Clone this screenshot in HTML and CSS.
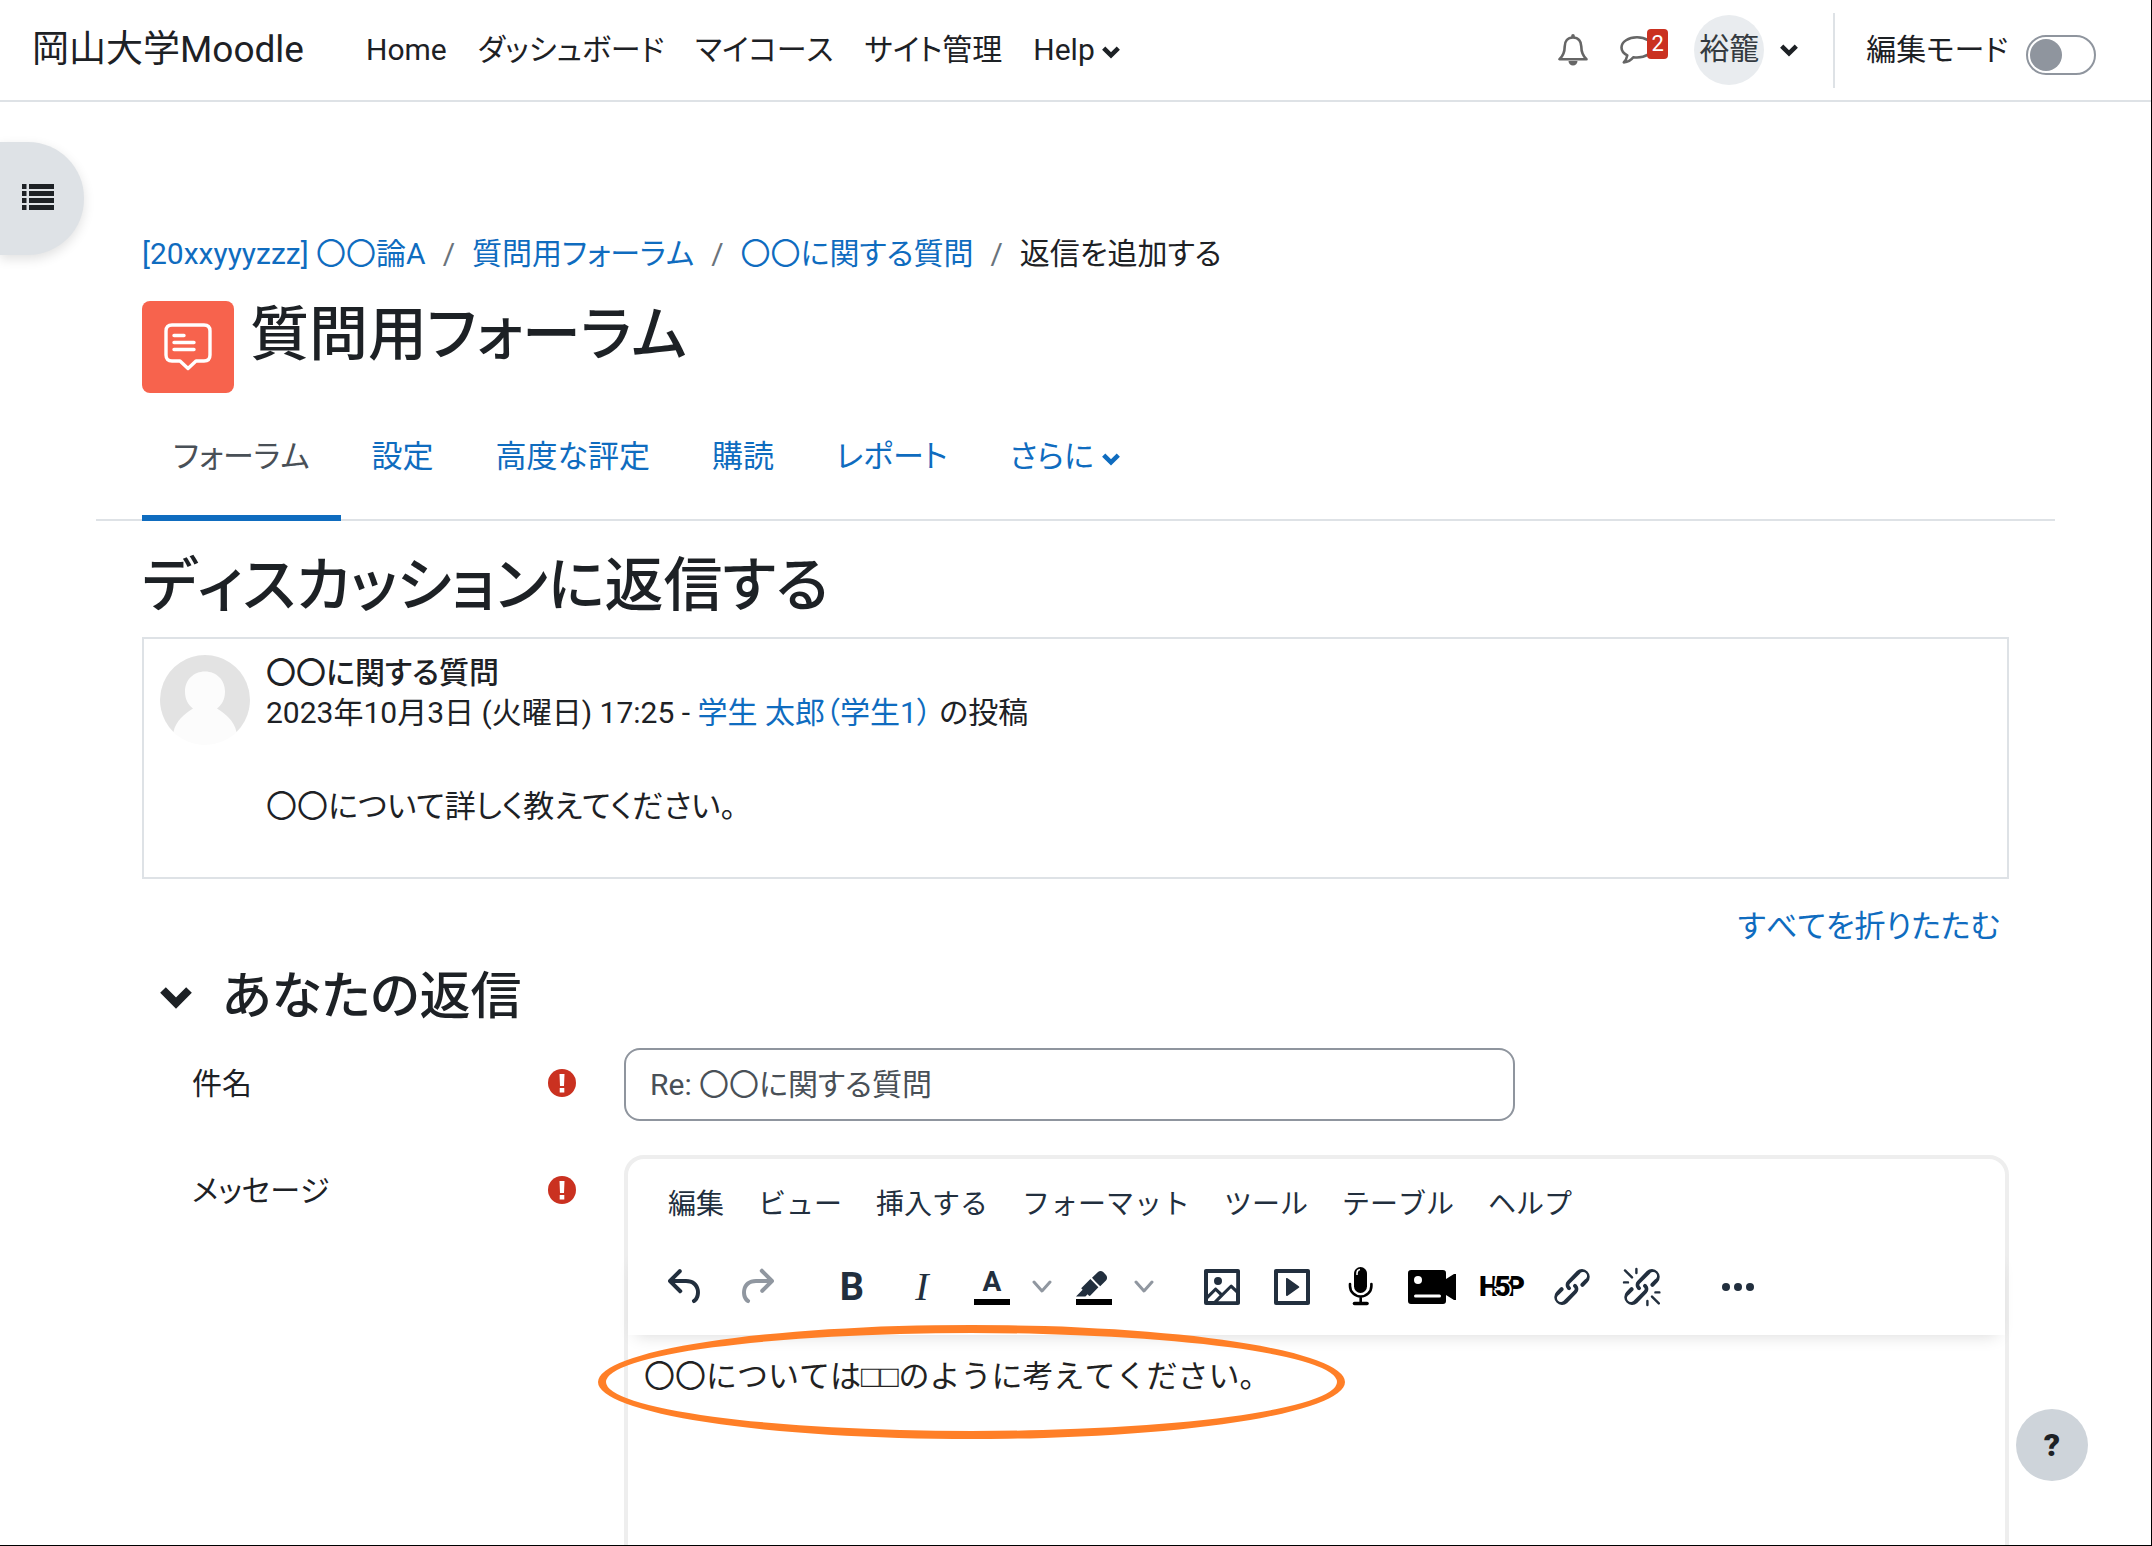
FILE: index.html
```html
<!DOCTYPE html>
<html lang="ja">
<head>
<meta charset="utf-8">
<meta name="viewport" content="width=device-width, initial-scale=1">
<title>質問用フォーラム: 返信を追加する</title>
<link rel="stylesheet" href="styles.css">
</head>
<body>
<svg class="sprite" aria-hidden="true">
  <symbol id="chevron" viewBox="0 0 16 12"><path d="M1.500 2.500L8 9l6.500-6.500" fill="none" stroke="currentColor" stroke-width="4"/></symbol>
  <symbol id="thin-chevron" viewBox="0 0 20 14"><path d="M2 2l8 9 8-9" fill="none" stroke="currentColor" stroke-width="3" stroke-linecap="round" stroke-linejoin="round"/></symbol>
  <symbol id="required" viewBox="0 0 28 28"><circle cx="14" cy="14" r="14" fill="#ca3120"/><path d="M11.500 5h5l-.5 12h-4zM11.700 19h4.600v4.500h-4.600z" fill="#fff"/></symbol>
</svg>
<div class="page">
  <header class="navbar">
    <a class="brand" href="#">岡山大学Moodle</a>
    <nav class="primary-nav" aria-label="サイトナビゲーション">
      <a href="#">Home</a>
      <a href="#">ダッシュボード</a>
      <a href="#">マイコース</a>
      <a href="#">サイト管理</a>
      <a href="#">Help <svg class="caret"><use href="#chevron"/></svg></a>
    </nav>
    <div class="user-nav">
      <button class="icon-button" type="button" aria-label="通知">
        <svg width="30" height="32" viewBox="0 0 30 32"><path d="M15 3.500c-5.500 0-8.300 3.900-8.300 9 0 6.200-1.900 9.700-5.200 12.700h27c-3.300-3-5.200-6.500-5.200-12.700 0-5.100-2.800-9-8.300-9z" fill="none" stroke="#666" stroke-width="2.600" stroke-linejoin="round"/><path d="M13.200 4V1.800a1.800 1.800 0 0 1 3.600 0V4zM10.500 27h9a4.500 4.500 0 0 1-9 0z" fill="#666"/></svg>
      </button>
      <button class="icon-button messages" type="button" aria-label="メッセージ">
        <svg width="34" height="30" viewBox="0 0 34 30"><path d="M17 2.300C8.500 2.300 1.500 6.700 1.500 12.500c0 3.300 2.200 6 5.800 7.900-.5 2.900-1.600 5-3.500 7 4-.4 7.300-2.300 9.500-5.200 1.200.2 2.400.3 3.700.3 8.500 0 15.500-4.200 15.500-10S25.500 2.300 17 2.300z" fill="none" stroke="#666" stroke-width="2.600" stroke-linejoin="round"/></svg>
        <span class="count">2</span>
      </button>
      <button class="user-menu" type="button"><span class="initials">裕籠</span><svg class="caret"><use href="#chevron"/></svg></button>
      <div class="edit-mode">
        <label for="editmode">編集モード</label>
        <input id="editmode" class="switch" type="checkbox" role="switch">
      </div>
    </div>
  </header>

  <button class="drawer-toggle" type="button" aria-label="コースインデックスを開く">
    <svg width="32" height="26" viewBox="0 0 32 26"><path d="M0 0h4.500v5H0zM7 0h25v5H7zM0 7h4.500v5H0zM7 7h25v5H7zM0 14h4.500v5H0zM7 14h25v5H7zM0 21h4.500v5H0zM7 21h25v5H7z" fill="currentColor"/></svg>
  </button>

  <main class="content">
    <nav aria-label="パンくず">
      <ol class="breadcrumb">
        <li><a href="#">[20xxyyyzzz] 〇〇論A</a></li>
        <li><a href="#">質問用フォーラム</a></li>
        <li><a href="#">〇〇に関する質問</a></li>
        <li>返信を追加する</li>
      </ol>
    </nav>

    <div class="activity-header">
      <span class="activity-icon">
        <svg width="48" height="48" viewBox="0 0 48 48" fill="none" stroke="#fff" stroke-width="3.400" stroke-linecap="round" stroke-linejoin="round"><path d="M8 2h32q6 0 6 6v24q0 6-6 6h-8l-8 7.500L16 38H8q-6 0-6-6V8q0-6 6-6z"/><path d="M10 12.500h10M10 19.500h20M10 26.500h20"/></svg>
      </span>
      <h1>質問用フォーラム</h1>
    </div>

    <nav class="tabs" aria-label="活動">
      <a class="active" href="#" aria-current="page">フォーラム</a>
      <a href="#">設定</a>
      <a href="#">高度な評定</a>
      <a href="#">購読</a>
      <a href="#">レポート</a>
      <a href="#">さらに <svg class="caret"><use href="#chevron"/></svg></a>
    </nav>

    <h2>ディスカッションに返信する</h2>

    <article class="post">
      <svg class="avatar" viewBox="0 0 90 90"><circle cx="45" cy="45" r="45" fill="#fcfcfc"/><path d="M45 0a45 45 0 0 0-31.500 77.100C15.500 66 25 58.500 33 53.500c-5-4-8-9-8-17C25 25 33.500 16.500 45 16.500S65 25 65 36.500c0 8-3 13-8 17 8 5 17.500 12.500 19.500 23.600A45 45 0 0 0 45 0z" fill="#e3e3e3"/></svg>
      <div class="post-text">
        <h3>〇〇に関する質問</h3>
        <p>2023年10月3日 (火曜日) 17:25 - <a href="#">学生 太郎（学生1）</a> の投稿</p>
        <p class="post-body">〇〇について詳しく教えてください。</p>
      </div>
    </article>

    <form class="reply">
      <div class="collapse-row"><a href="#">すべてを折りたたむ</a></div>
      <div class="section-title">
        <svg class="section-caret"><use href="#chevron"/></svg>
        <h3>あなたの返信</h3>
      </div>

      <div class="field">
        <label for="subject">件名</label>
        <svg class="required" role="img" aria-label="必須"><use href="#required"/></svg>
        <input id="subject" class="subject" type="text" value="Re: 〇〇に関する質問">
      </div>

      <div class="field">
        <label for="message">メッセージ</label>
        <svg class="required" role="img" aria-label="必須"><use href="#required"/></svg>
        <div class="editor">
          <div class="menubar">
            <button type="button">編集</button>
            <button type="button">ビュー</button>
            <button type="button">挿入する</button>
            <button type="button">フォーマット</button>
            <button type="button">ツール</button>
            <button type="button">テーブル</button>
            <button type="button">ヘルプ</button>
          </div>
          <div class="toolbar">
            <div class="group">
              <button type="button" aria-label="元に戻す"><svg viewBox="0 0 24 24"><path d="M6.400 8H12c3.700 0 6.200 2 6.800 5.100.6 2.700-.4 5.600-2.300 6.800a1 1 0 0 1-1-1.800c1.100-.6 1.800-2.700 1.400-4.600-.5-2.100-2.100-3.500-4.900-3.500H6.400l3.300 3.300a1 1 0 1 1-1.400 1.400l-5-5a1 1 0 0 1 0-1.400l5-5a1 1 0 0 1 1.400 1.400z"/></svg></button>
              <button type="button" aria-label="やり直し" disabled><svg viewBox="0 0 24 24"><path d="M17.600 10H12c-2.800 0-4.400 1.400-4.900 3.500-.4 2 .3 4 1.400 4.600a1 1 0 1 1-1 1.800c-2-1.200-2.900-4.100-2.300-6.800.6-3 3-5.100 6.800-5.100h5.600l-3.300-3.300a1 1 0 1 1 1.400-1.400l5 5a1 1 0 0 1 0 1.400l-5 5a1 1 0 0 1-1.400-1.400z"/></svg></button>
            </div>
            <div class="group">
              <button type="button" class="bold">B</button>
              <button type="button" class="italic">I</button>
              <div class="split">
                <button type="button" class="color-letter">A</button>
                <button type="button" class="open" aria-label="文字色"><svg><use href="#thin-chevron"/></svg></button>
              </div>
              <div class="split">
                <button type="button" aria-label="背景色"><svg viewBox="0 0 24 24"><path d="M3 18h18v3H3z" fill="#000"/><path d="M7.700 16.700H3l3.300-3.300-.7-.8L10.200 8l4 4.100-4 4.200c-.2.2-.6.2-.8 0l-.6-.7zM12.700 9.200L11 7.400l3-2.900a2 2 0 0 1 2.600 0L18 6c.7.7.7 2 0 2.700l-2.900 2.900z"/></svg></button>
                <button type="button" class="open" aria-label="背景色を選択"><svg><use href="#thin-chevron"/></svg></button>
              </div>
            </div>
            <div class="group">
              <button type="button" aria-label="イメージ"><svg viewBox="0 0 24 24"><path d="M5 15.700l3.300-3.200c.3-.3.7-.3 1 0L12 15l4.100-4c.3-.4.8-.4 1 0l2 1.900V5H5zM5 18v1h3l2.800-2.900-2-2zM19 15l-2.500-2.400-6.400 6.500H19zM4 3h16c.6 0 1 .4 1 1v16c0 .6-.4 1-1 1H4a1 1 0 0 1-1-1V4c0-.6.4-1 1-1zm6 8a2 2 0 1 0 0-4 2 2 0 0 0 0 4z"/></svg></button>
              <button type="button" aria-label="マルチメディア"><svg viewBox="0 0 24 24"><path d="M4 3h16c.6 0 1 .4 1 1v16c0 .6-.4 1-1 1H4a1 1 0 0 1-1-1V4c0-.6.4-1 1-1zm1 2v14h14V5zm4.800 2.600l5.600 4a.5.5 0 0 1 0 .8l-5.600 4A.5.5 0 0 1 9 16V8a.5.5 0 0 1 .8-.4z"/></svg></button>
              <button type="button" aria-label="音声を録音する"><svg viewBox="0 0 48 48"><rect x="16" y="4" width="13" height="26" rx="6.500" fill="#000"/><path d="M19 12v-2q0-3 3-3.500" fill="none" stroke="#fff" stroke-width="1.500"/><path d="M12 21v2a10.700 10.500 0 0 0 21.400 0v-2M22.700 34v6" fill="none" stroke="#000" stroke-width="2.600" stroke-linecap="round"/><path d="M16.500 40.500h12.500" stroke="#000" stroke-width="3.600" stroke-linecap="round"/></svg></button>
              <button type="button" aria-label="動画を録画する"><svg viewBox="0 0 48 48"><path d="M3 7h32q3 0 3 3v6l8-5h2v26h-2l-8-5v6q0 3-3 3H3q-3 0-3-3V10q0-3 3-3z" fill="#000"/><circle cx="10" cy="17" r="4" fill="#fff"/><path d="M7.500 33h24" stroke="#fff" stroke-width="3" stroke-linecap="round"/></svg></button>
              <button type="button" class="h5p" aria-label="H5P"><span>H</span><span class="five">5</span><span>P</span></button>
              <button type="button" aria-label="リンク"><svg viewBox="0 0 24 24"><path id="link" d="M6.200 12.300a1 1 0 0 1 1.400 1.400l-2 2a2 2 0 1 0 2.600 2.800l4.800-4.800a1 1 0 0 0 0-1.400 1 1 0 1 1 1.400-1.300 2.900 2.900 0 0 1 0 4L9.600 20a3.900 3.900 0 0 1-5.500-5.500zm11.600-.6a1 1 0 0 1-1.400-1.400l2-2a2 2 0 1 0-2.600-2.800L11 10.300a1 1 0 0 0 0 1.400A1 1 0 1 1 9.600 13a2.900 2.900 0 0 1 0-4L14.400 4a3.900 3.900 0 0 1 5.500 5.500z"/></svg></button>
              <button type="button" aria-label="リンク解除"><svg viewBox="0 0 24 24"><use href="#link"/><path d="M9.200 3v2M3.500 3.700L7 7.200M3 9.700h2M14.700 19v2M17 16.800l3.400 3.400M18.700 14.700h2" fill="none" stroke="currentColor" stroke-width="1.200" stroke-linecap="round"/></svg></button>
            </div>
            <div class="group">
              <button type="button" aria-label="さらに表示"><svg viewBox="0 0 24 24"><circle cx="6" cy="12" r="2"/><circle cx="12" cy="12" r="2"/><circle cx="18" cy="12" r="2"/></svg></button>
            </div>
          </div>
          <textarea id="message">〇〇については□□のように考えてください。</textarea>
          <span class="marker"></span>
        </div>
      </div>
    </form>
  </main>

  <button class="help" type="button" aria-label="ヘルプ">?</button>
</div>
</body>
</html>
```

FILE: styles.css
```css
* { box-sizing: border-box; }

body {
  margin: 0;
  font: 30px/44px Roboto, "Noto Sans CJK JP", sans-serif;
  font-feature-settings: "palt";
  font-kerning: none;
  color: #1d2125;
  background: #fff;
}

button, input, textarea {
  font: inherit;
  font-feature-settings: inherit;
  font-kerning: inherit;
  color: inherit;
}
button { padding: 0; border: 0; background: none; }
svg { display: block; flex: none; }
a { color: #0f6cbf; text-decoration: none; }
h1, h2, h3, p { margin: 0; }
h1, h2, h3 { font-weight: 500; }

.sprite { position: absolute; width: 0; height: 0; }

.page {
  position: relative;
  height: 100vh;
  overflow: hidden;
  border: solid #000;
  border-width: 0 1px 1px 0;
}

.caret { display: inline-block; width: 18px; height: 14px; vertical-align: 1px; }

/* Top bar */
.navbar {
  display: flex;
  align-items: center;
  height: 102px;
  padding: 0 55px 0 32px;
  border-bottom: 2px solid #dee2e6;
}
.brand { margin-right: 46px; font-size: 37px; color: #1d2125; }
.primary-nav { display: flex; gap: 31px; margin-left: 16px; }
.primary-nav a { color: #1d2125; white-space: nowrap; }
.user-nav { display: flex; align-items: center; margin-left: auto; }
.icon-button { display: flex; align-items: center; }
.messages { position: relative; width: 48px; margin: 0 26px 0 32px; }
.count {
  position: absolute;
  right: 0;
  top: -6px;
  width: 21px;
  border-radius: 4px;
  font-size: 22px;
  line-height: 30px;
  color: #fff;
  background: #ca3120;
}
.user-menu { display: flex; align-items: center; gap: 16px; }
.initials {
  width: 70px;
  height: 70px;
  border-radius: 50%;
  line-height: 68px;
  color: #343a40;
  background: #e9ecef;
}
.edit-mode {
  display: flex;
  align-items: center;
  gap: 18px;
  height: 75px;
  margin-left: 35px;
  padding-left: 31px;
  border-left: 2px solid #dee2e6;
}
.switch {
  display: grid;
  align-items: center;
  width: 70px;
  height: 40px;
  margin: 10px 0 0;
  padding: 2px;
  border: 2px solid #8f959e;
  border-radius: 20px;
  appearance: none;
}
.switch::before { content: ""; width: 32px; height: 32px; border-radius: 50%; background: #8f959e; }

/* Course index handle */
.drawer-toggle {
  position: absolute;
  left: 0;
  top: 142px;
  display: flex;
  align-items: center;
  width: 84px;
  height: 113px;
  padding-left: 22px;
  padding-bottom: 4px;
  border-radius: 0 56px 56px 0;
  background: #dee2e6;
  box-shadow: 0 4px 12px rgba(0, 0, 0, .12);
}

.content { padding: 130px 142px 0; }

.breadcrumb { display: flex; margin: 0; padding: 0; list-style: none; }
.breadcrumb li + li::before { content: "/"; margin: 0 17px; color: #6a737b; }

.activity-header { display: flex; gap: 16px; margin-top: 25px; }
.activity-icon {
  display: grid;
  place-items: center;
  width: 92px;
  height: 92px;
  border-radius: 8px;
  background: #f7634d;
}
h1, h2 { font-size: 59px; line-height: 68px; }

.tabs {
  display: flex;
  margin: 22px -46px 0;
  padding-left: 46px;
  border-bottom: 2px solid #dee2e6;
  font-size: 31px;
}
.tabs a { margin-bottom: -2px; padding: 20px 31px 36px; border-bottom: 6px solid transparent; }
.tabs .active { border-color: #0f6cbf; color: #495057; }

h2 { margin: 31px 0 17px; }

.post { display: flex; gap: 16px; height: 242px; padding: 16px; border: 2px solid #dee2e6; }
.avatar { width: 90px; height: 90px; }
.post-text { margin-top: -2px; line-height: 40px; }
.post-text h3 { font-size: 30px; }
.post-text .post-body { margin-top: 54px; font-size: 31px; }

.collapse-row {
  display: flex;
  justify-content: flex-end;
  margin-top: 26px;
  padding-right: 9px;
  font-size: 31px;
}
.section-title { display: flex; align-items: center; gap: 30px; margin: 18px 0 21px 18px; }
.section-caret { width: 32px; height: 24px; }
.section-title h3 { font-size: 51px; line-height: 60px; }

.field {
  display: grid;
  grid-template-columns: 356px 76px 1fr;
  align-items: start;
  margin-bottom: 34px;
  padding-left: 50px;
}
.field label { margin-top: 14px; }
.required { width: 28px; height: 28px; margin-top: 21px; }
.subject {
  width: 891px;
  height: 73px;
  padding: 0 24px 5px;
  border: 2px solid #8f959e;
  border-radius: 16px;
  color: #495057;
  background: #fff;
}

/* Rich text editor */
.editor { position: relative; border: 4px solid #eee; border-radius: 20px; color: #222f3e; }
.menubar {
  display: flex;
  gap: 34px;
  padding: 24px 40px 22px;
  font-size: 28px;
  font-feature-settings: normal;
}
.toolbar {
  position: relative;
  display: flex;
  gap: 48px;
  height: 86px;
  padding: 14px 34px;
  box-shadow: 0 8px 16px -8px rgba(0, 0, 0, .16);
}
.group { display: flex; gap: 22px; }
.toolbar button { width: 48px; height: 48px; line-height: 48px; }
.toolbar svg { width: 48px; height: 48px; fill: currentColor; }
.toolbar button:disabled { color: #9097a0; }
.split { display: flex; }
.toolbar .open { width: 32px; padding-left: 16px; color: #9097a0; }
.toolbar .open svg { width: 20px; height: 14px; }
.bold { font-size: 38px; font-weight: 700; }
.italic { font-family: "Liberation Serif", serif; font-size: 40px; font-style: italic; }
.toolbar .color-letter {
  width: 36px;
  height: 42px;
  margin: 0 6px;
  border-bottom: 6px solid #000;
  font-size: 28px;
  font-weight: 700;
  line-height: 38px;
}
.h5p { display: flex; justify-content: center; font-size: 28px; font-weight: 900; color: #000; }
.five {
  position: relative;
  margin: 0 -4px;
  text-shadow: 2px 0 #fff, -2px 0 #fff, 1px 2px #fff, -1px -2px #fff;
}
.editor textarea {
  display: block;
  width: 100%;
  height: 400px;
  padding: 18px 16px;
  border: 0;
  font: 31px/48px "Liberation Sans", "Noto Sans CJK JP", sans-serif;
  font-kerning: none;
  color: #222;
  background: none;
  outline: 0;
  resize: none;
}
.marker {
  position: absolute;
  left: -30px;
  top: 166px;
  width: 747px;
  height: 114px;
  border: 8px solid #ff7f27;
  border-radius: 50%;
  pointer-events: none;
}

.help {
  position: absolute;
  right: 63px;
  bottom: 64px;
  width: 72px;
  height: 72px;
  border-radius: 50%;
  font-size: 32px;
  font-weight: 900;
  background: #ced4da;
}
```
